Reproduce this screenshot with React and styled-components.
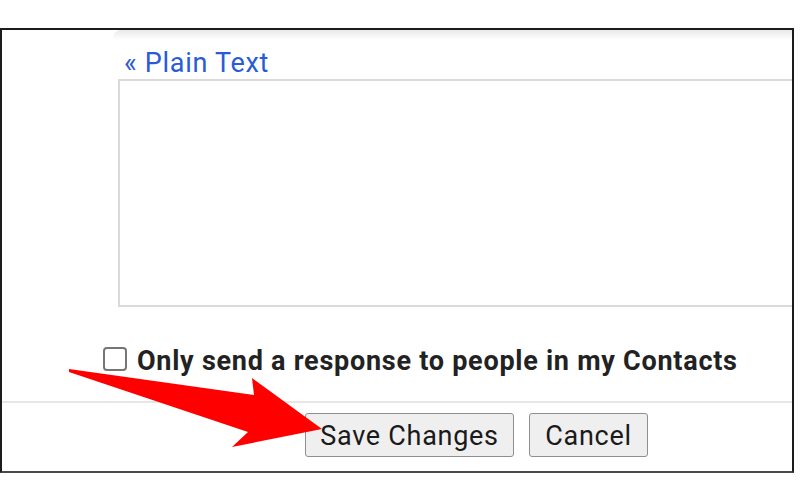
import React from "react";
import styled, { createGlobalStyle } from "styled-components";

const Global = createGlobalStyle`
  html, body { margin: 0; padding: 0; background: #ffffff; }
  body { font-family: Roboto, "Liberation Sans", Arial, sans-serif; }
  * { box-sizing: border-box; }
`;

const Page = styled.div`
  position: relative;
  width: 800px;
  height: 500px;
  overflow: hidden;
  padding-top: 28px;
`;

const Frame = styled.div`
  width: 794px;
  height: 445px;
  border: 2px solid #1c1c1c;
  border-bottom-color: #4a4a4a;
  overflow: hidden;
  display: flex;
  flex-direction: column;
  background: #fff;
`;

const TopShade = styled.div`
  height: 10px;
  margin-left: 111px;
  background: linear-gradient(#e9e9e9, rgba(255, 255, 255, 0));
  border-top-left-radius: 8px;
`;

const Editor = styled.div`
  margin-left: 116px;
  display: flex;
  flex-direction: column;
`;

const ModeLink = styled.a`
  margin-top: 8px;
  padding-left: 6px;
  font-size: 27px;
  letter-spacing: 0.7px;
  line-height: 30px;
  color: #2a5bd7;
  text-decoration: none;
  cursor: pointer;
`;

const TextArea = styled.div`
  margin-top: 1px;
  width: 720px;
  height: 228px;
  border: 2px solid #dadada;
  background: #fff;
`;

const CheckRow = styled.label`
  margin-top: 39px;
  margin-left: 101px;
  display: flex;
  align-items: center;
  gap: 10px;
  font-size: 27px;
  letter-spacing: 0.74px;
  line-height: 30px;
  font-weight: 700;
  color: #222;
`;

const Box = styled.span`
  width: 24px;
  height: 24px;
  border: 2px solid #767676;
  border-radius: 4px;
  background: #fff;
  flex: none;
  margin-top: -4px;
`;

const Divider = styled.div`
  margin-top: 25px;
  height: 2px;
  background: #e6e6e6;
`;

const Actions = styled.div`
  margin-top: 10px;
  margin-left: 303px;
  display: flex;
  gap: 15px;
`;

const Button = styled.button`
  height: 44px;
  width: ${(p) => p.$w}px;
  padding: 2px 0 0;
  font-family: Roboto, "Liberation Sans", Arial, sans-serif;
  font-size: 27px;
  letter-spacing: 0.7px;
  color: #1a1a1a;
  background: #efefef;
  border: 1px solid #8f8f8f;
  border-radius: 3px;
`;

const Arrow = styled.svg`
  position: absolute;
  left: 0;
  top: 0;
  pointer-events: none;
`;

export default function App() {
  return (
    <Page>
      <Global />
      <Frame>
        <TopShade />
        <Editor>
          <ModeLink>« Plain Text</ModeLink>
          <TextArea />
        </Editor>
        <CheckRow>
          <Box />
          Only send a response to people in my Contacts
        </CheckRow>
        <Divider />
        <Actions>
          <Button $w={209}>Save Changes</Button>
          <Button $w={119}>Cancel</Button>
        </Actions>
      </Frame>
      <Arrow width="800" height="500" viewBox="0 0 800 500">
        <polygon
          points="69,369 254,395 252,378 322,429 232,447 248,432 69,372"
          fill="#ff0000"
        />
      </Arrow>
    </Page>
  );
}
